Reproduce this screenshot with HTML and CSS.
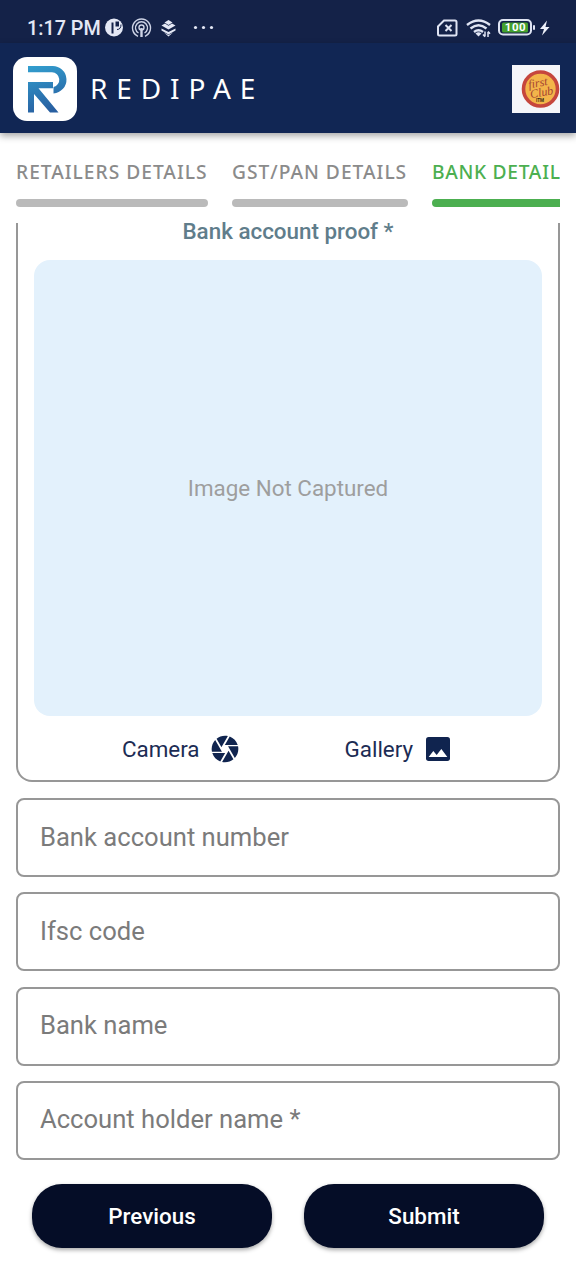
FILE: index.html
```
<!DOCTYPE html>
<html lang="en">
<head>
  <meta charset="UTF-8">
  <meta name="viewport" content="width=device-width, initial-scale=1">
  <title>Redipae - Bank Details</title>
  <link rel="stylesheet" href="styles.css">
</head>
<body>

<div class="status-bar">
  <span class="time">1:17 PM</span>
  <svg class="status-left" width="112" height="24" viewBox="0 0 112 24">
    <circle cx="10" cy="11.500" r="9" fill="#e4e8f5"/>
    <path d="M8.500 6.500v11" fill="none" stroke="#14224a" stroke-width="2"/>
    <path d="M11.500 5.500h3.500v5h-3.500z" fill="#14224a"/>
    <path d="M13 13.500q4 0 4-5" fill="none" stroke="#14224a" stroke-width="1"/>
    <g fill="none" stroke="#cdd3e6" stroke-width="1.400">
      <path d="M34 20.300a9 9 0 1 1 7 0"/>
      <path d="M34.500 17a6 6 0 1 1 6 0"/>
      <circle cx="37.500" cy="11.500" r="2.500"/>
      <path d="M37.500 12v9" stroke-width="2.400"/>
    </g>
    <g fill="#e4e8f5">
      <path d="M64.500 4l4 2.500-4 2.500-4-2.500z"/>
      <path d="M57.500 9.500l3.500-2 3.500 2.300 3.500-2.300 3.500 2-7 4z"/>
      <path d="M57.500 12.500l7 3.500 7-3.500v2l-7 4-7-4z"/>
      <path d="M60 16.500l4.500 2.500 4.500-2.500-4.500 4z"/>
      <circle cx="91.500" cy="11.500" r="1.600"/>
      <circle cx="99.500" cy="11.500" r="1.600"/>
      <circle cx="107.500" cy="11.500" r="1.600"/>
    </g>
  </svg>
  <svg class="status-right" width="116" height="24" viewBox="0 0 116 24">
    <path d="M8 4.500h11q1.500 0 1.500 1.500v12q0 1.500-1.500 1.500H3.500Q2 19.500 2 18v-7.500z" fill="none" stroke="#dfe4f3" stroke-width="2"/>
    <path d="M9.500 9l6 6M15.500 9l-6 6" stroke="#dfe4f3" stroke-width="2"/>
    <g fill="none" stroke="#dfe4f3" stroke-width="2.400">
      <path d="M31 9q11.500-9 23 0"/>
      <path d="M34.500 12.500q8-6.500 16 0"/>
      <path d="M38 16q4.500-3.500 9 0"/>
    </g>
    <path d="M39.500 17.500q3-2.500 6 0l-3 3z" fill="#dfe4f3"/>
    <path d="M49 15.500v5M49 20.800l-2-2.200M52 21v-5M52 15.500l2 2.200" fill="none" stroke="#dfe4f3" stroke-width="1.500"/>
    <rect x="63" y="4" width="32" height="14.500" rx="4" fill="none" stroke="#dfe4f3" stroke-width="2"/>
    <rect x="66" y="6.500" width="26" height="10" rx="1.500" fill="#43a02f"/>
    <rect x="97" y="9" width="2" height="5" rx="1" fill="#dfe4f3"/>
    <text class="battery" x="79.500" y="15.400" text-anchor="middle">100</text>
    <path d="M111 4.500l-7 8.500h4l-2 6.500 7.500-8.500h-4z" fill="#eef1fa"/>
  </svg>
</div>

<header class="app-bar">
  <svg class="logo" width="64" height="64" viewBox="0 0 64 64">
    <defs>
      <linearGradient id="blue" x1="15" y1="9" x2="30" y2="56" gradientUnits="userSpaceOnUse">
        <stop offset="0" stop-color="#329fcf"/>
        <stop offset="1" stop-color="#285fa1"/>
      </linearGradient>
    </defs>
    <rect width="64" height="64" rx="14" fill="#fff"/>
    <path d="M15 9h24a13.700 13.700 0 0 1 1.500 27.400V30a7.500 7.500 0 0 0-1.500-14.800H15z" fill="url(#blue)"/>
    <path d="M15 25h25v6.200H25.500L45.500 55.500H37L21 37v18.500h-6z" fill="url(#blue)"/>
  </svg>
  <h1 class="brand">REDIPAE</h1>
  <svg class="shop-logo" width="48" height="48" viewBox="0 0 48 48">
    <rect width="48" height="48" fill="#f5f5f9"/>
    <circle cx="28.500" cy="24" r="17" fill="#f3b44a" stroke="#c6463d" stroke-width="3.600"/>
    <g class="shop-script" transform="rotate(-10 28 24)">
      <text x="27" y="21.500" text-anchor="middle">first</text>
      <text x="29" y="31.500" text-anchor="middle">Club</text>
    </g>
    <text class="shop-tag" x="28" y="37.300" text-anchor="middle">ITM</text>
  </svg>
</header>

<nav class="tabs">
  <div class="tab tab-retailers">RETAILERS DETAILS</div>
  <div class="tab tab-gst">GST/PAN DETAILS</div>
  <div class="tab tab-bank active">BANK DETAIL</div>
</nav>

<main class="content">
  <section class="proof-card">
    <h2 class="proof-title">Bank account proof *</h2>
    <div class="preview">Image Not Captured</div>
    <div class="sources">
      <div class="source">
        Camera
        <svg width="32" height="32" viewBox="0 0 24 24" fill="#10244f"><path d="M9.400 10.500l4.770-8.260C13.470 2.090 12.750 2 12 2c-2.400 0-4.600.85-6.320 2.250l3.660 6.350.06-.1zM21.540 9c-.92-2.920-3.150-5.260-6-6.340L11.880 9h9.660zm.26 1h-7.490l.29.500 4.760 8.250C21 16.970 22 14.610 22 12c0-.69-.07-1.350-.2-2zM8.540 12l-3.900-6.750C3.010 7.030 2 9.390 2 12c0 .69.07 1.350.2 2h7.490l-1.150-2zm-6.080 3c.92 2.920 3.150 5.260 6 6.340L12.120 15H2.460zm11.270 0l-3.900 6.760c.7.150 1.420.24 2.170.24 2.400 0 4.600-.85 6.320-2.250l-3.660-6.350-.93 1.600z"/></svg>
      </div>
      <div class="source">
        Gallery
        <svg width="32" height="32" viewBox="0 0 24 24"><rect x="3" y="3" width="18" height="18" rx="2" fill="#10244f"/><path d="M5 18l3.500-4.500 2.500 3 3.500-4.500L19 18z" fill="#fff"/></svg>
      </div>
    </div>
  </section>

  <form class="fields">
    <input class="field" type="text" placeholder="Bank account number">
    <input class="field" type="text" placeholder="Ifsc code">
    <input class="field" type="text" placeholder="Bank name">
    <input class="field" type="text" placeholder="Account holder name *">
  </form>
</main>

<footer class="actions">
  <button class="btn">Previous</button>
  <button class="btn">Submit</button>
</footer>

</body>
</html>
```
FILE: styles.css
```
* {
  box-sizing: border-box;
}
body {
  margin: 0;
  height: 1280px;
  overflow: hidden;
  background-color: #fff;
  font-family: Roboto, sans-serif;
}
.status-bar {
  display: flex;
  align-items: center;
  height: 43px;
  padding: 13px 24px 0 27px;
  background-color: #142248;
  color: #e4e8f5;
}
.time {
  width: 77px;
  font-size: 19.8px;
  font-weight: 500;
  white-space: nowrap;
}
.status-right {
  margin-left: auto;
}
.battery {
  font: 700 11.5px Roboto, sans-serif;
  letter-spacing: 0.5px;
  fill: #fff;
}
.app-bar {
  display: flex;
  align-items: center;
  height: 90px;
  padding: 2px 16px 0 13px;
  background-color: #112654;
  box-shadow: 0 3px 7px rgba(0, 0, 0, 0.35);
}
.brand {
  margin: 0 0 3px 13px;
  color: #fff;
  font-family: "Noto Sans", sans-serif;
  font-size: 28px;
  font-weight: 400;
  letter-spacing: 8.9px;
}
.shop-logo {
  margin-left: auto;
}
.shop-script {
  font: italic 400 12px "Liberation Serif", serif;
  fill: #a34332;
}
.shop-tag {
  font: 700 4.5px Roboto, sans-serif;
  fill: #332815;
}
.tabs {
  display: flex;
  gap: 24px;
  height: 90px;
  margin: 0 16px;
  padding-top: 26px;
  overflow: hidden;
}
.tab {
  flex: none;
  height: 48px;
  color: #8b8b8b;
  font-family: "Noto Sans", sans-serif;
  font-size: 19.2px;
  font-weight: 500;
  line-height: 25px;
  letter-spacing: 1px;
  white-space: nowrap;
}
.tab::after {
  content: "";
  display: block;
  height: 8px;
  margin-top: 15px;
  border-radius: 4px;
  background-color: #bababa;
}
.tab-retailers {
  width: 192px;
}
.tab-gst {
  width: 176px;
}
.tab-bank {
  width: 142px;
}
.tab.active {
  color: #4caf50;
}
.tab-bank {
  letter-spacing: 0.7px;
}
.tab.active::after {
  background-color: #4caf50;
}
.content {
  padding: 0 16px;
}
.proof-card {
  height: 559px;
  padding: 0 16px;
  border: 2px solid #979797;
  border-top: none;
  border-radius: 0 0 16px 16px;
}
.proof-title {
  margin: 0;
  height: 37px;
  color: #607d8b;
  font-size: 22.4px;
  font-weight: 500;
  line-height: 16px;
  text-align: center;
}
.preview {
  display: flex;
  align-items: center;
  justify-content: center;
  height: 456px;
  border-radius: 16px;
  background-color: #e3f1fc;
  color: #9e9e9e;
  font-size: 22.4px;
}
.sources {
  display: flex;
  justify-content: center;
  gap: 104px;
  padding-top: 17px;
}
.source {
  display: flex;
  align-items: center;
  gap: 9px;
  color: #1c2c54;
  font-size: 22.4px;
}
.fields {
  display: flex;
  flex-direction: column;
  gap: 15.3px;
  margin-top: 16px;
}
.field {
  height: 79px;
  padding: 0 22px 2px;
  border: 2px solid #979797;
  border-radius: 8px;
  outline: none;
  font-family: Roboto, sans-serif;
  font-size: 25.6px;
}
.field::placeholder {
  color: #7b7b7b;
  opacity: 1;
}
.actions {
  display: flex;
  gap: 32px;
  padding: 24px 32px;
}
.btn {
  flex: 1;
  height: 64px;
  border: none;
  border-radius: 30px;
  background-color: #050d27;
  box-shadow: 0 2px 4px rgba(0, 0, 0, 0.35);
  color: #fff;
  font-family: Roboto, sans-serif;
  font-size: 22.4px;
  font-weight: 500;
}
```
